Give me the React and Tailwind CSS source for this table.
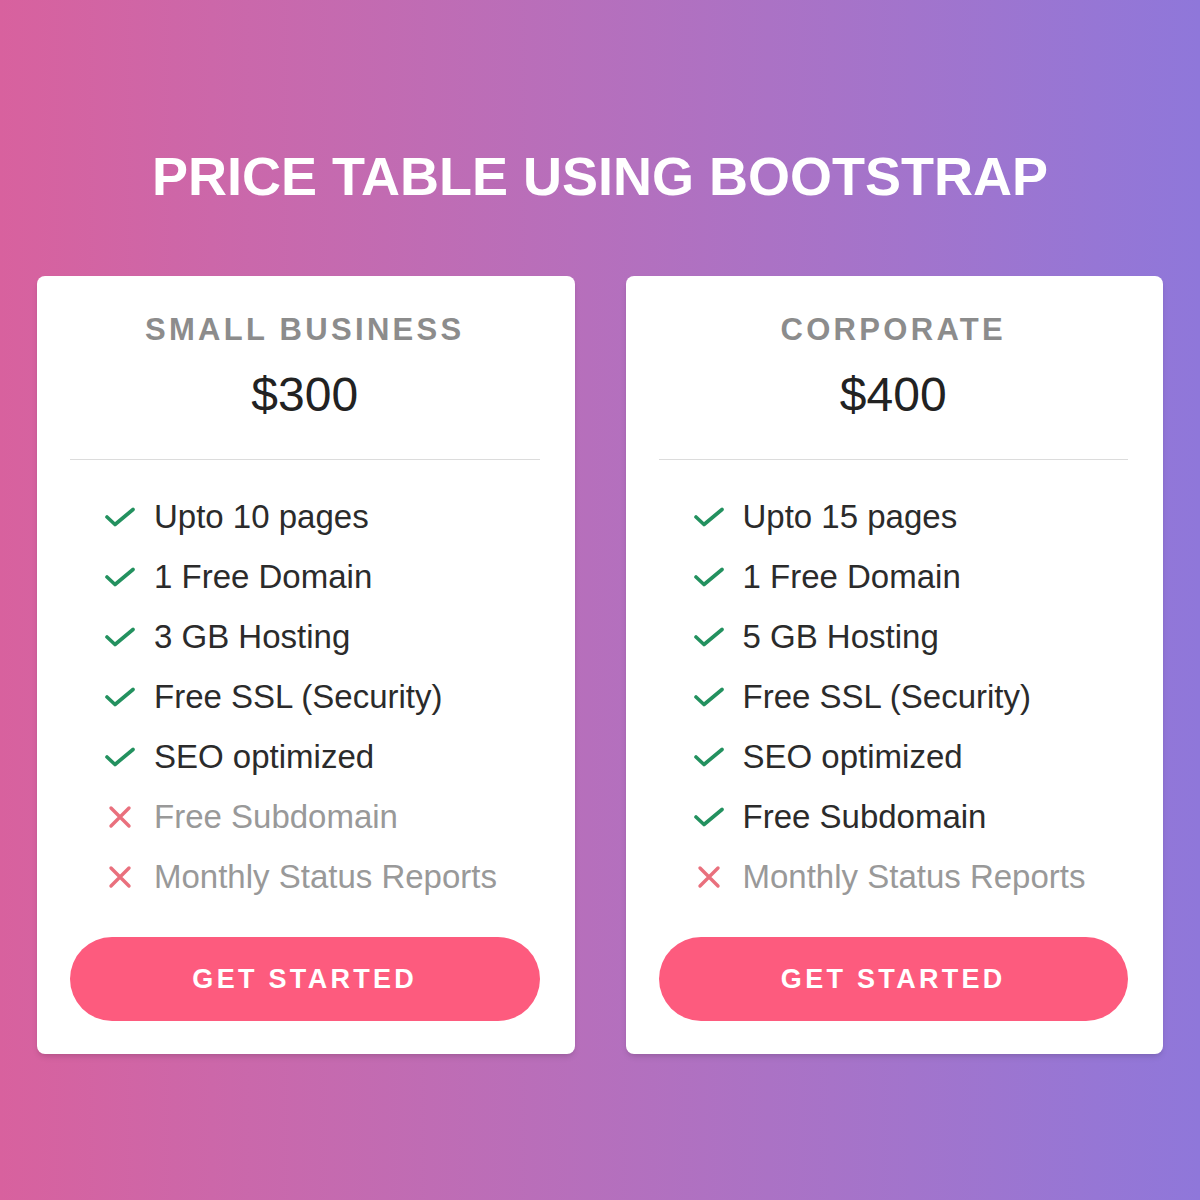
import React from "react";

const plans = [
  {
    name: "SMALL BUSINESS",
    price: "$300",
    features: [
      { label: "Upto 10 pages", ok: true },
      { label: "1 Free Domain", ok: true },
      { label: "3 GB Hosting", ok: true },
      { label: "Free SSL (Security)", ok: true },
      { label: "SEO optimized", ok: true },
      { label: "Free Subdomain", ok: false },
      { label: "Monthly Status Reports", ok: false },
    ],
  },
  {
    name: "CORPORATE",
    price: "$400",
    features: [
      { label: "Upto 15 pages", ok: true },
      { label: "1 Free Domain", ok: true },
      { label: "5 GB Hosting", ok: true },
      { label: "Free SSL (Security)", ok: true },
      { label: "SEO optimized", ok: true },
      { label: "Free Subdomain", ok: true },
      { label: "Monthly Status Reports", ok: false },
    ],
  },
];

const Check = () => (
  <svg viewBox="0 0 30 20" className="w-[30px] h-[20px]" fill="none">
    <polyline
      points="2,10 10,17.5 28,2.5"
      stroke="#23915f"
      strokeWidth="3.6"
      strokeLinecap="round"
      strokeLinejoin="round"
    />
  </svg>
);

const Cross = () => (
  <svg viewBox="0 0 24 24" className="w-[24px] h-[24px]" fill="none">
    <path
      d="M3 3 L21 21 M21 3 L3 21"
      stroke="#e9707d"
      strokeWidth="3.4"
      strokeLinecap="round"
    />
  </svg>
);

const PlanCard = ({ plan }) => (
  <div className="bg-white rounded-lg shadow-md pl-[33px] pr-[35px] pt-[36px] pb-[33px]">
    {/* Header */}
    <div className="text-center">
      <h2 className="text-[31px] leading-[36px] font-bold tracking-[3.3px] text-[#8c8c8c]">
        {plan.name}
      </h2>
      <p className="mt-[19px] text-[48px] leading-[56px] text-[#222]">
        {plan.price}
      </p>
    </div>

    <div className="h-px bg-[#dcdcdc] mt-[36px]" />

    {/* Features */}
    <ul className="mt-[27px] pl-[35px] flex flex-col">
      {plan.features.map((f) => (
        <li key={f.label} className="flex items-center h-[60px]">
          <span className="w-[49px] flex items-center">
            <span className="w-[30px] flex justify-center">
              {f.ok ? <Check /> : <Cross />}
            </span>
          </span>
          <span
            className={
              "text-[33px] " + (f.ok ? "text-[#2b2b2b]" : "text-[#999]")
            }
          >
            {f.label}
          </span>
        </li>
      ))}
    </ul>

    <button className="mt-[30px] w-full h-[84px] rounded-full bg-[#fd5b7e] text-white text-[27px] font-bold tracking-[3.3px]">
      GET STARTED
    </button>
  </div>
);

export default function App() {
  return (
    <div
      className="min-h-screen bg-gradient-to-r from-[#d8619e] to-[#8f77da] px-[37px] pt-[145px]"
      style={{ fontFamily: '"Liberation Sans", Arial, sans-serif' }}
    >
      <h1 className="text-center text-white font-bold text-[54px] leading-[62px]">
        PRICE TABLE USING BOOTSTRAP
      </h1>

      <div className="grid grid-cols-2 gap-[51px] mt-[69px]">
        {plans.map((plan) => (
          <PlanCard key={plan.name} plan={plan} />
        ))}
      </div>
    </div>
  );
}
